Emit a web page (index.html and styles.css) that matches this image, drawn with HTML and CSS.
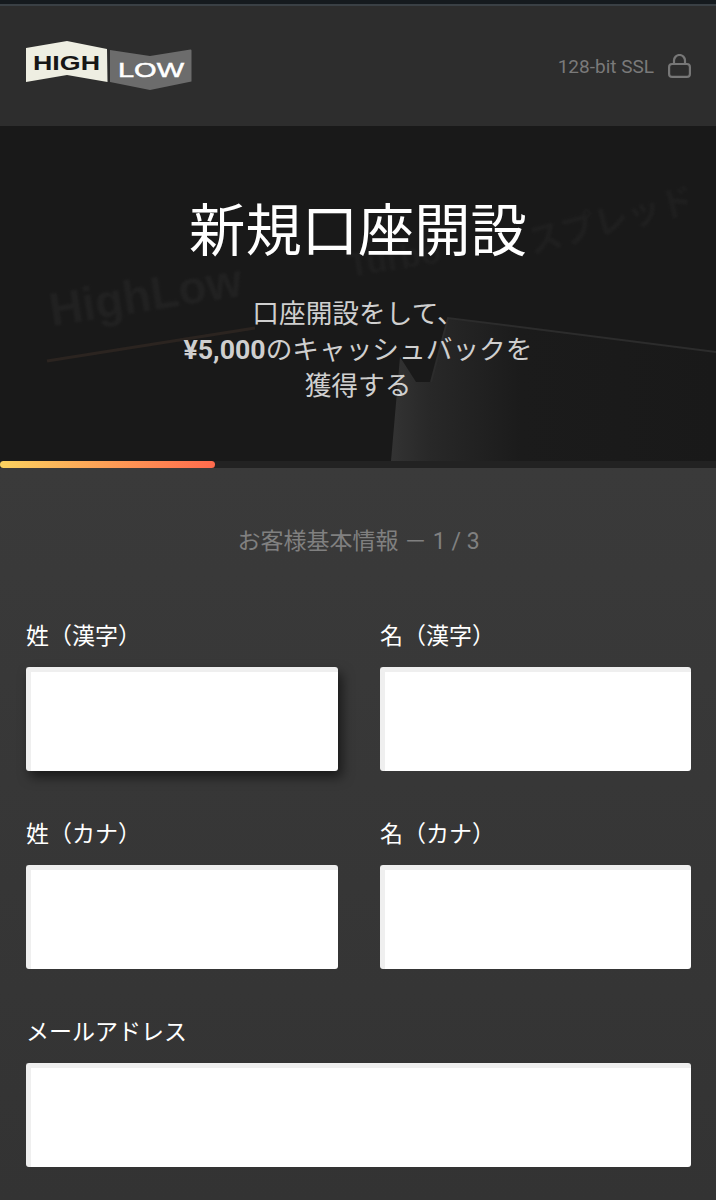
FILE: index.html
```html
<!DOCTYPE html>
<html lang="ja">
<head>
<meta charset="utf-8">
<title>新規口座開設</title>
<link rel="stylesheet" href="styles.css">
</head>
<body>
<div class="statusbar"></div>
<header class="header">
  <svg class="logo" width="168" height="52" viewBox="26 40 168 52">
    <path d="M26 48 L67 41 L107 49 L107.500 82 L67 75 L26 82 Z" fill="#eeeee2"/>
    <path d="M110 50 L150 56 L190.500 49.500 Q191.500 49.500 191.500 50.500 L191.500 81.500 L150 90 L110 82 Z" fill="#6c6c6c"/>
    <text x="33" y="70" class="logo-high" textLength="67" lengthAdjust="spacingAndGlyphs">HIGH</text>
    <text x="118" y="77" class="logo-low" textLength="66" lengthAdjust="spacingAndGlyphs">LOW</text>
  </svg>
  <div class="ssl">
    <span class="ssl-text">128-bit SSL</span>
    <svg class="lock" width="23" height="24" viewBox="0 0 23 24">
      <rect x="1.100" y="10" width="20.800" height="12.900" rx="3" fill="none" stroke="#777" stroke-width="2.200"/>
      <path d="M6 10 V6.500 a5.500 5.500 0 0 1 11 0 V10" fill="none" stroke="#777" stroke-width="2.200"/>
    </svg>
  </div>
</header>
<section class="hero">
  <svg class="hero-bg" width="716" height="335" viewBox="0 126 716 335" aria-hidden="true">
    <defs>
      <linearGradient id="peak" x1="0" y1="0" x2="1" y2="0">
        <stop offset="0" stop-color="#333"/>
        <stop offset=".12" stop-color="#282828"/>
        <stop offset=".4" stop-color="#1b1b1b"/>
        <stop offset="1" stop-color="#191919"/>
      </linearGradient>
    </defs>
    <path d="M391 461 L400 357 L416 382 L431 382 L448 318 L716 352 L716 461 Z" fill="url(#peak)"/>
    <path d="M431 382 L448 318 L716 352" fill="none" stroke="#2c2c2c" stroke-width="2"/>
    <path d="M47 361 L255 328" fill="none" stroke="#2b2420" stroke-width="3"/>
    <text class="bg-word" transform="translate(52 326) rotate(-9)">HighLow</text>
    <text class="bg-word bg-small" transform="translate(350 277) rotate(-9)">Turbo</text>
    <text class="bg-word bg-small" transform="translate(532 254) rotate(-15)">スプレッド</text>
  </svg>
  <div class="hero-copy">
    <h1 class="hero-title">新規口座開設</h1>
    <p class="hero-sub">口座開設をして、<br><b class="amount">¥5,000</b>のキャッシュバックを<br>獲得する</p>
  </div>
</section>
<div class="progress"><div class="progress-fill"></div></div>
<main class="form">
  <p class="step">お客様基本情報 － 1 / 3</p>
  <div class="row">
    <div class="field"><label class="label">姓（漢字）</label><div class="input input-focus"></div></div>
    <div class="field"><label class="label">名（漢字）</label><div class="input"></div></div>
  </div>
  <div class="row">
    <div class="field"><label class="label">姓（カナ）</label><div class="input"></div></div>
    <div class="field"><label class="label">名（カナ）</label><div class="input"></div></div>
  </div>
  <div class="row row-single">
    <div class="field"><label class="label">メールアドレス</label><div class="input"></div></div>
  </div>
</main>
</body>
</html>
```
FILE: styles.css
```css
* { box-sizing: border-box; }
html, body { margin: 0; padding: 0; }
body {
  width: 716px;
  height: 1200px;
  overflow: hidden;
  background: #363636;
  font-family: Roboto, "Noto Sans CJK JP", sans-serif;
}
.statusbar { height: 6px; background: #151a1e; border-bottom: 2px solid #3a4045; }
.header {
  height: 120px;
  background: #2d2d2d;
  display: flex;
  align-items: center;
  justify-content: space-between;
  padding: 0 25px 0 26px;
}
.logo { display: block; }
.logo-high { font: 700 21px "Liberation Sans", sans-serif; fill: #161616; }
.logo-low { font: 400 21px "Liberation Sans", sans-serif; fill: #fff; stroke: #fff; stroke-width: .5px; }
.ssl { display: flex; align-items: center; gap: 14px; }
.ssl-text { font-size: 19px; color: #7a7a7a; }
.lock { display: block; }
.hero {
  position: relative;
  height: 335px;
  background: #191919;
  text-align: center;
  overflow: hidden;
}
.hero-bg { position: absolute; left: 0; top: 0; }
.bg-word { font: 700 46px "Liberation Sans", "Noto Sans CJK JP", sans-serif; fill: #212121; filter: blur(1px); }
.bg-small { font-size: 34px; fill: #1f1f1f; }
.hero-copy { position: relative; padding-top: 64px; }
.hero-title { margin: 0; font-size: 56.300px; line-height: 84px; font-weight: 400; color: #fff; }
.hero-sub { margin: 22px 0 0; font-size: 26.700px; line-height: 36px; color: #cfcfcf; }
.amount { font-weight: 700; }
.progress { height: 7px; background: #222; }
.progress-fill {
  width: 215px;
  height: 7px;
  border-radius: 4px;
  background: linear-gradient(90deg, #fbd25f, #ff6a4d);
}
.form { padding: 0 25px 0 26px; background: linear-gradient(#3a3a3a, #333); height: 732px; }
.step { margin: 0; padding-top: 56px; text-align: center; font-size: 23px; line-height: 36px; color: #808080; }
.row { display: grid; grid-template-columns: 312px 311px; column-gap: 42px; margin-top: 47px; }
.row-single { grid-template-columns: 1fr; }
.step + .row { margin-top: 60px; }
.label { display: block; font-size: 23px; line-height: 34px; color: #fff; margin-bottom: 13px; }
.input {
  height: 104px;
  background: #fff;
  border-radius: 3px;
  border-top: 5px solid #efefef;
  border-left: 5px solid #efefef;
}
.input-focus { box-shadow: 4px 6px 12px rgba(0,0,0,.55); }
```
